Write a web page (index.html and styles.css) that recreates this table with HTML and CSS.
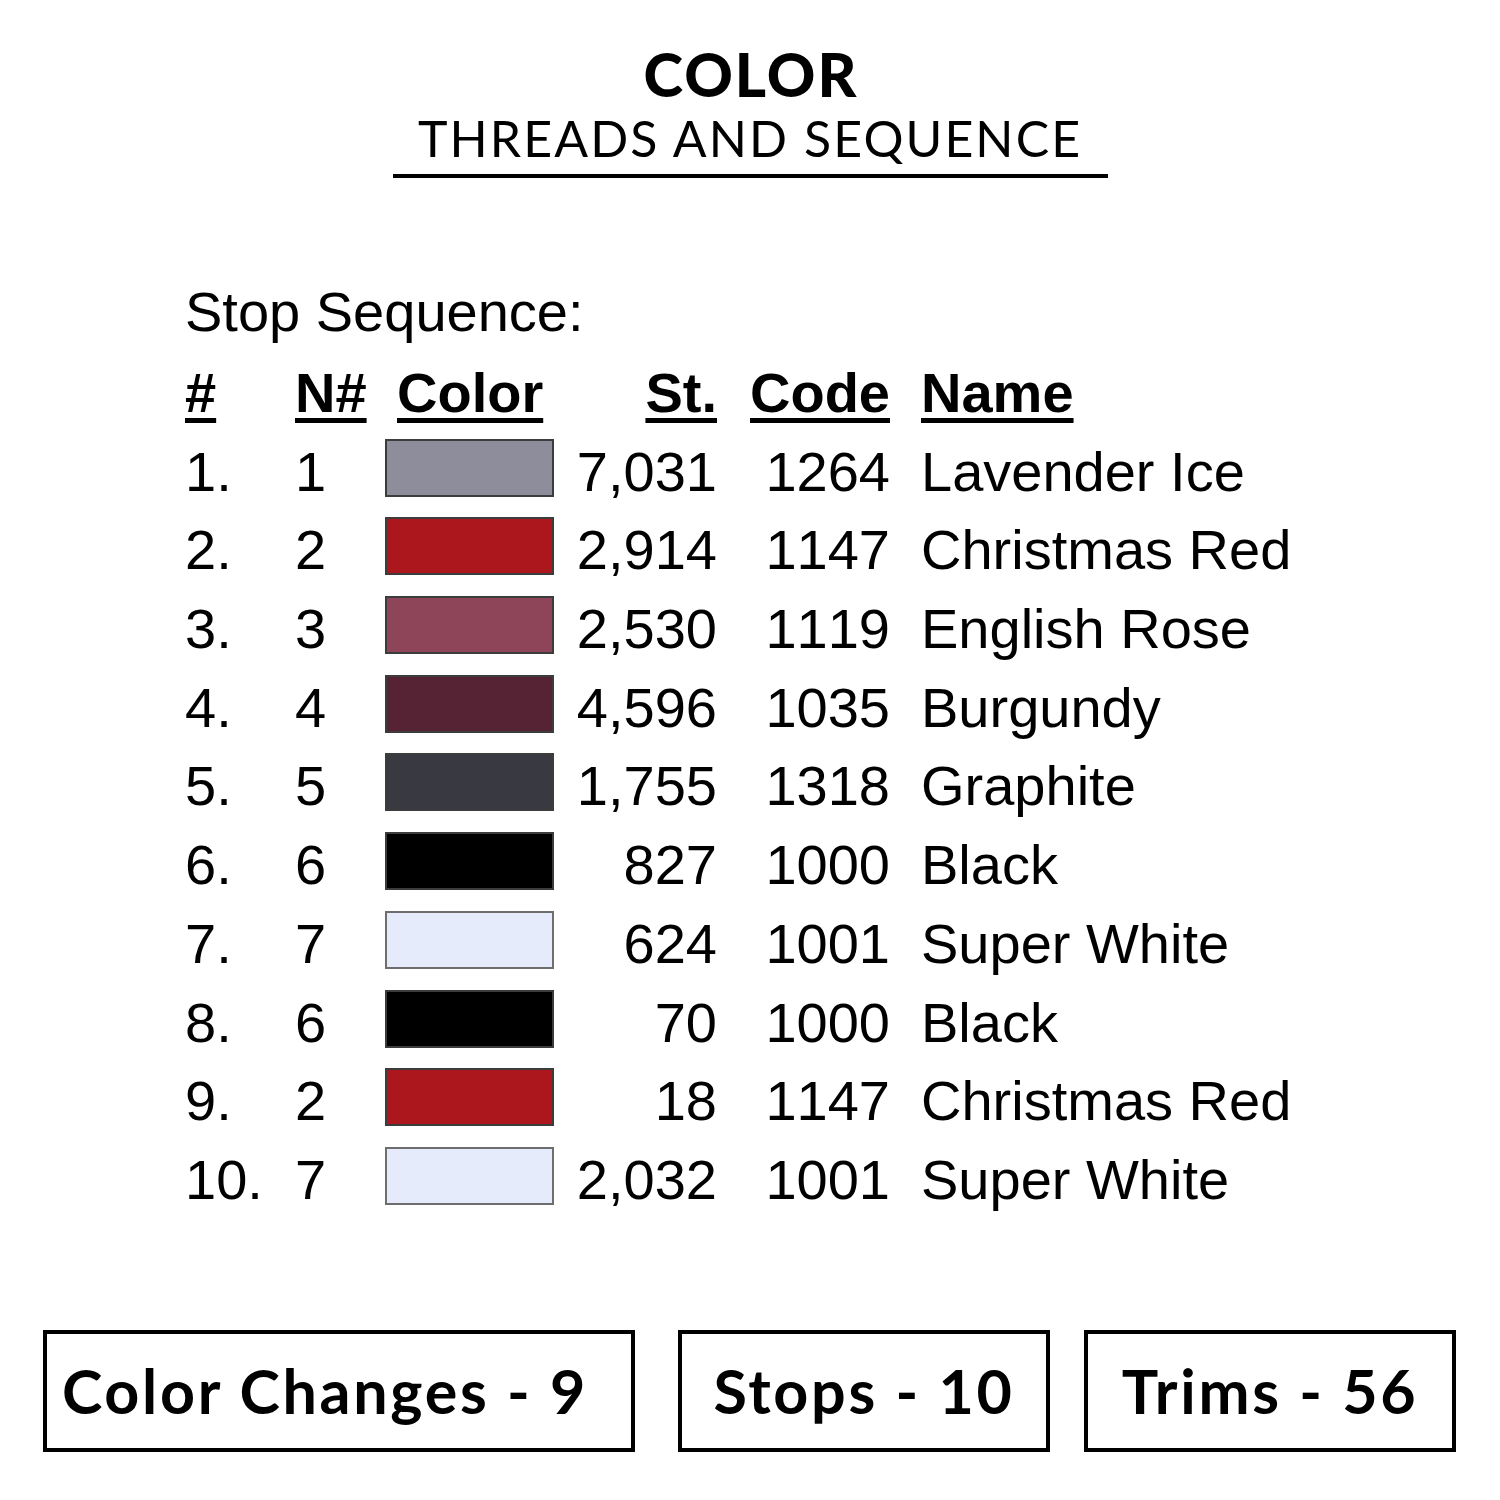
FILE: index.html
```html
<!DOCTYPE html>
<html lang="en">
<head>
<meta charset="utf-8">
<title>Color Threads and Sequence</title>
<link rel="stylesheet" href="styles.css">
</head>
<body>
<div class="page">
  <header class="title">
    <div class="title-main">COLOR</div>
    <div class="title-sub">THREADS AND SEQUENCE</div>
    <div class="title-rule"></div>
  </header>

  <section class="sequence">
    <div class="seq-label">Stop Sequence:</div>
    <div class="seq-grid">
      <div class="hd">#</div>
      <div class="hd">N#</div>
      <div class="hd hd-color">Color</div>
      <div class="hd num">St.</div>
      <div class="hd num">Code</div>
      <div class="hd name">Name</div>

      <div>1.</div><div>1</div><div class="sw-cell"><span class="sw" style="background:#8e8d9b"></span></div><div class="num">7,031</div><div class="num">1264</div><div class="name">Lavender Ice</div>
      <div>2.</div><div>2</div><div class="sw-cell"><span class="sw" style="background:#ac161d"></span></div><div class="num">2,914</div><div class="num">1147</div><div class="name">Christmas Red</div>
      <div>3.</div><div>3</div><div class="sw-cell"><span class="sw" style="background:#8e4459"></span></div><div class="num">2,530</div><div class="num">1119</div><div class="name">English Rose</div>
      <div>4.</div><div>4</div><div class="sw-cell"><span class="sw" style="background:#552333"></span></div><div class="num">4,596</div><div class="num">1035</div><div class="name">Burgundy</div>
      <div>5.</div><div>5</div><div class="sw-cell"><span class="sw" style="background:#393a41"></span></div><div class="num">1,755</div><div class="num">1318</div><div class="name">Graphite</div>
      <div>6.</div><div>6</div><div class="sw-cell"><span class="sw" style="background:#000000"></span></div><div class="num">827</div><div class="num">1000</div><div class="name">Black</div>
      <div>7.</div><div>7</div><div class="sw-cell"><span class="sw sw-light" style="background:#e5ebfa"></span></div><div class="num">624</div><div class="num">1001</div><div class="name">Super White</div>
      <div>8.</div><div>6</div><div class="sw-cell"><span class="sw" style="background:#000000"></span></div><div class="num">70</div><div class="num">1000</div><div class="name">Black</div>
      <div>9.</div><div>2</div><div class="sw-cell"><span class="sw" style="background:#ac161d"></span></div><div class="num">18</div><div class="num">1147</div><div class="name">Christmas Red</div>
      <div>10.</div><div>7</div><div class="sw-cell"><span class="sw sw-light" style="background:#e5ebfa"></span></div><div class="num">2,032</div><div class="num">1001</div><div class="name">Super White</div>
    </div>
  </section>

  <section class="stats">
    <div class="stat stat-wide">Color Changes - 9</div>
    <div class="stat">Stops - 10</div>
    <div class="stat">Trims - 56</div>
  </section>
</div>
</body>
</html>
```

FILE: styles.css
```css
html, body {
  margin: 0;
  padding: 0;
  background: #ffffff;
  color: #000000;
}

.page {
  width: 1500px;
  height: 1500px;
  overflow: hidden;
}

.title {
  display: flex;
  flex-direction: column;
  align-items: center;
  padding-top: 44px;
  font-family: "Lato", "Open Sans", sans-serif;
}

.title-main {
  font-size: 60px;
  line-height: 60px;
  font-weight: 900;
  letter-spacing: 2px;
  padding-left: 2px;
}

.title-sub {
  margin-top: 9px;
  font-size: 50px;
  line-height: 50px;
  font-weight: 400;
  letter-spacing: 2.1px;
}

.title-rule {
  margin-top: 11px;
  width: 715px;
  height: 4px;
  background: #000000;
}

.sequence {
  padding-left: 185px;
  padding-top: 104px;
  font-family: "Liberation Sans", Arial, sans-serif;
  font-size: 56px;
  font-kerning: none;
}

.seq-label {
  line-height: 60px;
  height: 60px;
  margin-bottom: 12px;
}

.seq-grid {
  display: grid;
  grid-template-columns: 110px 90px 169px 163px 173px auto;
  grid-auto-rows: 78.7px;
  line-height: 78.7px;
  white-space: nowrap;
}

.hd {
  font-weight: 700;
  text-decoration: underline;
  text-decoration-thickness: 5px;
  text-underline-offset: 6px;
}

.hd-color {
  padding-left: 12px;
}

.num {
  text-align: right;
}

.name {
  padding-left: 31px;
}

.sw-cell {
  display: flex;
  align-items: flex-start;
}

.sw {
  display: block;
  box-sizing: border-box;
  width: 169px;
  height: 58px;
  margin-top: 6px;
  border: 2px solid #3c3c3c;
}

.sw-light {
  border-color: #6e6e6e;
}

.stats {
  margin-top: 110px;
  display: flex;
  gap: 34px;
  padding-left: 43px;
  font-family: "Lato", "Open Sans", sans-serif;
  font-weight: 700;
  font-size: 61px;
}

.stat {
  box-sizing: border-box;
  width: 372px;
  height: 122px;
  border: 4px solid #000000;
  display: flex;
  align-items: center;
  justify-content: center;
  letter-spacing: 2.7px;
}

.stat-wide {
  width: 592px;
  margin-right: 9px;
  padding-right: 28px;
}
```
